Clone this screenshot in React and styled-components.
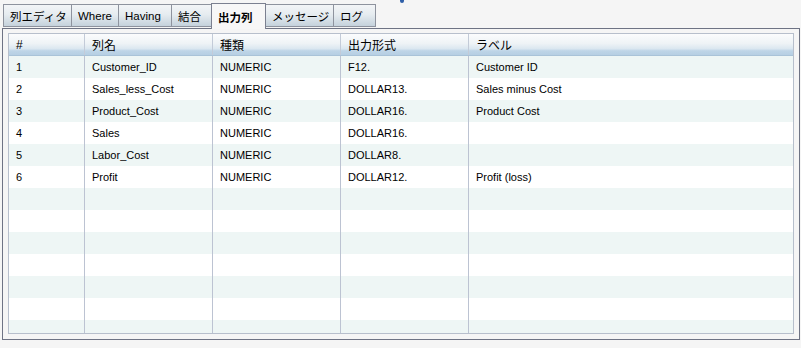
import React from "react";
import styled, { createGlobalStyle } from "styled-components";

const Global = createGlobalStyle`
  html, body { margin: 0; padding: 0; background: #f5f5f5; }
  body { font-family: "Liberation Sans", "Noto Sans CJK JP", sans-serif; font-size: 11px; color: #000; }
`;

const Root = styled.div`
  position: relative;
  width: 801px;
  height: 348px;
  padding-top: 3px;
  box-sizing: border-box;
  background: #f5f5f5;
`;

const TopMark = styled.div`
  position: absolute;
  left: 400px;
  top: -2px;
  width: 4px;
  height: 5px;
  border-radius: 2px;
  background: #2f5fa8;
`;

const TabStrip = styled.div`
  display: flex;
  align-items: flex-end;
  height: 25px;
  padding-left: 4px;
  position: relative;
  z-index: 2;
`;

const Tab = styled.div`
  box-sizing: border-box;
  width: ${(p) => p.$w}px;
  margin-left: -1px;
  height: ${(p) => (p.$active ? 26 : 23)}px;
  margin-bottom: ${(p) => (p.$active ? -1 : 1)}px;
  border: 1px solid ${(p) => (p.$active ? "#7b8090" : "#8e939e")};
  border-bottom: ${(p) => (p.$active ? "none" : "1px solid #8e939e")};
  background: ${(p) =>
    p.$active ? "#f7f7f7" : "linear-gradient(#f3f5f7 0%, #e6ecf0 45%, #c5d2dc 100%)"};
  font-weight: ${(p) => (p.$active ? "bold" : "normal")};
  font-size: 11.5px;
  display: flex;
  align-items: center;
  padding-left: 6px;
  padding-top: ${(p) => (p.$active ? 0 : 1)}px;
  white-space: nowrap;
  overflow: hidden;
  z-index: ${(p) => (p.$active ? 2 : 1)};
`;

const Panel = styled.div`
  box-sizing: border-box;
  margin-left: 2px;
  width: 798px;
  height: 312px;
  border: 1px solid #6e7384;
  padding: 4px 5px 5px 5px;
  background: #f5f5f5;
`;

const Table = styled.div`
  box-sizing: border-box;
  height: 301px;
  border: 1px solid #b7bfcc;
  background: #fff;
  overflow: hidden;
`;

const Columns = "76px 128px 128px 128px 1fr";

const HeaderRow = styled.div`
  display: grid;
  grid-template-columns: ${Columns};
  height: 22px;
  box-sizing: border-box;
  border-bottom: 1px solid #a9c3d8;
  background: linear-gradient(#fbfcfd 0%, #eef3f6 45%, #dbe7f0 70%, #bed5e7 80%, #b6cfe3 100%);
`;

const HeaderCell = styled.div`
  box-sizing: border-box;
  padding-left: 7px;
  display: flex;
  align-items: center;
  font-size: 12px;
  border-right: ${(p) => (p.$last ? "none" : "1px solid #c3cbd8")};
`;

const Body = styled.div`
  height: 277px;
  overflow: hidden;
`;

const Row = styled.div`
  display: grid;
  grid-template-columns: ${Columns};
  height: 22px;
  background: ${(p) => (p.$odd ? "#eef6f5" : "#ffffff")};
`;

const Cell = styled.div`
  box-sizing: border-box;
  padding-left: 7px;
  display: flex;
  align-items: center;
  white-space: nowrap;
  border-right: ${(p) => (p.$last ? "none" : "1px solid #bcc3d2")};
`;

const tabs = [
  { label: "列エディタ", w: 69 },
  { label: "Where", w: 48 },
  { label: "Having", w: 54 },
  { label: "結合", w: 41 },
  { label: "出力列", w: 55, active: true },
  { label: "メッセージ", w: 69 },
  { label: "ログ", w: 43 },
];

const headers = ["#", "列名", "種類", "出力形式", "ラベル"];

const data = [
  ["1", "Customer_ID", "NUMERIC", "F12.", "Customer ID"],
  ["2", "Sales_less_Cost", "NUMERIC", "DOLLAR13.", "Sales minus Cost"],
  ["3", "Product_Cost", "NUMERIC", "DOLLAR16.", "Product Cost"],
  ["4", "Sales", "NUMERIC", "DOLLAR16.", ""],
  ["5", "Labor_Cost", "NUMERIC", "DOLLAR8.", ""],
  ["6", "Profit", "NUMERIC", "DOLLAR12.", "Profit (loss)"],
];

const rows = Array.from({ length: 13 }, (_, i) => data[i] || ["", "", "", "", ""]);

export default function App() {
  return (
    <>
      <Global />
      <Root>
        <TopMark />
        <TabStrip>
          {tabs.map((t) => (
            <Tab key={t.label} $w={t.w} $active={t.active}>
              {t.label}
            </Tab>
          ))}
        </TabStrip>
        <Panel>
          <Table>
            <HeaderRow>
              {headers.map((h, i) => (
                <HeaderCell key={h} $last={i === headers.length - 1}>
                  {h}
                </HeaderCell>
              ))}
            </HeaderRow>
            <Body>
              {rows.map((r, ri) => (
                <Row key={ri} $odd={ri % 2 === 0}>
                  {r.map((c, ci) => (
                    <Cell key={ci} $last={ci === r.length - 1}>
                      {c}
                    </Cell>
                  ))}
                </Row>
              ))}
            </Body>
          </Table>
        </Panel>
      </Root>
    </>
  );
}
